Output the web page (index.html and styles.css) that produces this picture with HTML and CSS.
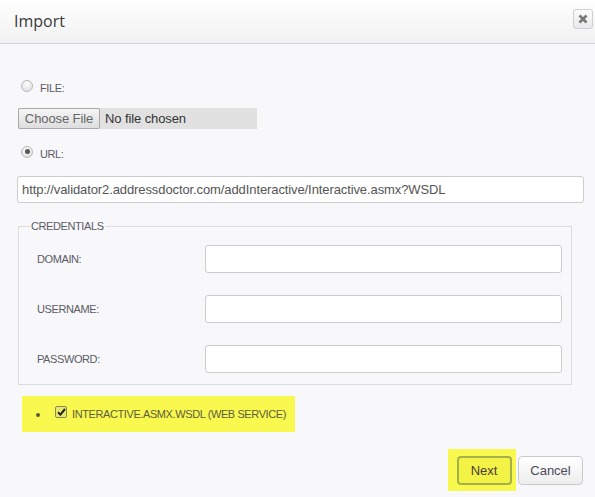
FILE: index.html
```html
<!DOCTYPE html>
<html>
<head>
<meta charset="utf-8">
<link rel="stylesheet" href="styles.css">
</head>
<body>
<div class="dialog">
  <div class="header">
    <div class="title">Import</div>
    <button class="close" aria-label="Close">
      <svg width="10" height="10" viewBox="0 0 10 10"><path d="M1.5 1.5 L8.5 8.5 M8.5 1.5 L1.5 8.5" stroke="#777" stroke-width="2.6" stroke-linecap="butt"/></svg>
    </button>
  </div>
  <div class="body">
    <div class="radio-row first">
      <span class="radio"></span>
      <span class="lbl">FILE:</span>
    </div>
    <div class="file-row">
      <span class="file-btn">Choose File</span>
      <span class="file-name">No file chosen</span>
    </div>
    <div class="radio-row second">
      <span class="radio checked"></span>
      <span class="lbl">URL:</span>
    </div>
    <div class="url-input">http://validator2.addressdoctor.com/addInteractive/Interactive.asmx?WSDL</div>
    <fieldset class="creds">
      <legend>CREDENTIALS</legend>
      <div class="field"><span class="lbl">DOMAIN:</span><span class="input"></span></div>
      <div class="field"><span class="lbl">USERNAME:</span><span class="input"></span></div>
      <div class="field"><span class="lbl">PASSWORD:</span><span class="input"></span></div>
    </fieldset>
    <div class="service">
      <span class="bullet"></span>
      <span class="check">
        <svg width="9" height="8" viewBox="0 0 9 8"><path d="M1 4.2 L3.4 6.6 L8 1" fill="none" stroke="#222" stroke-width="2"/></svg>
      </span>
      <span class="svc-lbl">INTERACTIVE.ASMX.WSDL (WEB SERVICE)</span>
    </div>
    <div class="footer">
      <div class="next-hl"><button class="btn next">Next</button></div>
      <button class="btn cancel">Cancel</button>
    </div>
  </div>
</div>
</body>
</html>
```
FILE: styles.css
```css
html, body {
  margin: 0;
  padding: 0;
}
body {
  width: 595px;
  height: 497px;
  background: #f8f8fa;
  font-family: "Liberation Sans", Arial, sans-serif;
  overflow: hidden;
}
.dialog {
  width: 595px;
  height: 497px;
  display: flex;
  flex-direction: column;
}
.header {
  height: 43px;
  border-bottom: 1px solid #d2d2d4;
  background: linear-gradient(#ffffff, #f1f1f1);
  display: flex;
  align-items: center;
  justify-content: space-between;
  padding: 0 2px 0 14px;
  flex: none;
}
.title {
  font-family: "Open Sans", sans-serif;
  font-size: 16px;
  color: #3a3a3a;
  margin-top: -2px;
}
.close {
  width: 20px;
  height: 20px;
  padding: 0;
  border: 1px solid #cfcfd2;
  border-radius: 3px;
  background: linear-gradient(#fbfbfb, #e9e9eb);
  display: flex;
  align-items: center;
  justify-content: center;
  margin-top: -5px;
}
.body {
  padding: 0 11px 0 17px;
  display: flex;
  flex-direction: column;
}
.radio-row {
  display: flex;
  align-items: center;
  height: 14px;
  padding-left: 4px;
}
.radio-row.first { margin-top: 37px; }
.radio-row.second { margin-top: 18px; }
.radio {
  width: 10px;
  height: 10px;
  border: 1px solid #b8b8b8;
  border-radius: 50%;
  background: radial-gradient(circle at 50% 30%, #fdfdfd, #dcdcdc);
  margin-top: -5px;
  position: relative;
}
.radio.checked::after {
  content: "";
  position: absolute;
  left: 2.5px;
  top: 2.5px;
  width: 5px;
  height: 5px;
  border-radius: 50%;
  background: #555;
}
.lbl {
  font-size: 11px;
  letter-spacing: -0.4px;
  color: #5b5b66;
  margin-left: 7px;
}
.file-row {
  display: flex;
  margin-top: 13px;
  margin-left: 1px;
  width: 239px;
  height: 21px;
  background: #e1e1e1;
}
.file-btn {
  width: 80px;
  height: 19px;
  border: 1px solid #a8a8a8;
  border-radius: 2px;
  background: linear-gradient(#f5f5f5, #dedede);
  font-size: 13px;
  letter-spacing: -0.1px;
  color: #666;
  display: flex;
  align-items: center;
  justify-content: center;
}
.file-name {
  font-size: 13px;
  letter-spacing: -0.1px;
  color: #333;
  margin-left: 5px;
  line-height: 21px;
}
.url-input {
  margin-top: 15px;
  height: 25px;
  border: 1px solid #cdcdd0;
  border-radius: 3px;
  background: #fff;
  font-size: 13px;
  letter-spacing: -0.1px;
  color: #555;
  line-height: 25px;
  padding-left: 4px;
}
.creds {
  margin: 17px 12px 0 1px;
  padding: 13px 9px 11px 18px;
  border: 1px solid #dcdcdf;
  display: flex;
  flex-direction: column;
}
.creds legend {
  font-size: 11px;
  letter-spacing: -0.4px;
  color: #5b5b66;
  padding: 0 1px;
  margin-left: -7px;
}
.field {
  display: flex;
  align-items: center;
  justify-content: space-between;
  height: 28px;
  margin-bottom: 22px;
}
.field:last-child {
  margin-bottom: 0;
}
.field .lbl {
  margin-left: 0;
}
.input {
  width: 355px;
  height: 26px;
  border: 1px solid #cdcdd0;
  border-radius: 3px;
  background: #fff;
}
.service {
  margin-top: 11px;
  margin-left: 5px;
  width: 273px;
  height: 36px;
  background: #f8f84e;
  display: flex;
  align-items: center;
  white-space: nowrap;
}
.bullet {
  width: 4px;
  height: 4px;
  border-radius: 50%;
  background: #5b5b3a;
  margin-left: 14px;
  margin-top: 2px;
}
.check {
  width: 10px;
  height: 10px;
  border: 1px solid #8a8a50;
  border-radius: 2px;
  background: #e8e870;
  margin-left: 15px;
  margin-top: -5px;
  display: flex;
  align-items: center;
  justify-content: center;
}
.svc-lbl {
  font-size: 11px;
  letter-spacing: -0.4px;
  color: #5e5e3e;
  margin-left: 5px;
}
.footer {
  display: flex;
  justify-content: flex-end;
  align-items: center;
  margin-top: 17px;
  margin-right: 1px;
}
.next-hl {
  width: 68px;
  height: 42px;
  background: #f8f84e;
  display: flex;
  align-items: center;
  justify-content: center;
  padding-left: 4px;
  box-sizing: border-box;
}
.btn {
  height: 29px;
  font-family: "Liberation Sans", Arial, sans-serif;
  font-size: 13px;
  border-radius: 4px;
  padding: 0;
}
.next {
  width: 55px;
  border: 2px solid #a4b04a;
  background: #f3f346;
  color: #4a3a3a;
}
.cancel {
  width: 65px;
  margin-left: 2px;
  border: 1px solid #cacacd;
  background: linear-gradient(#ffffff, #ededee);
  color: #4b4b5a;
}
```
